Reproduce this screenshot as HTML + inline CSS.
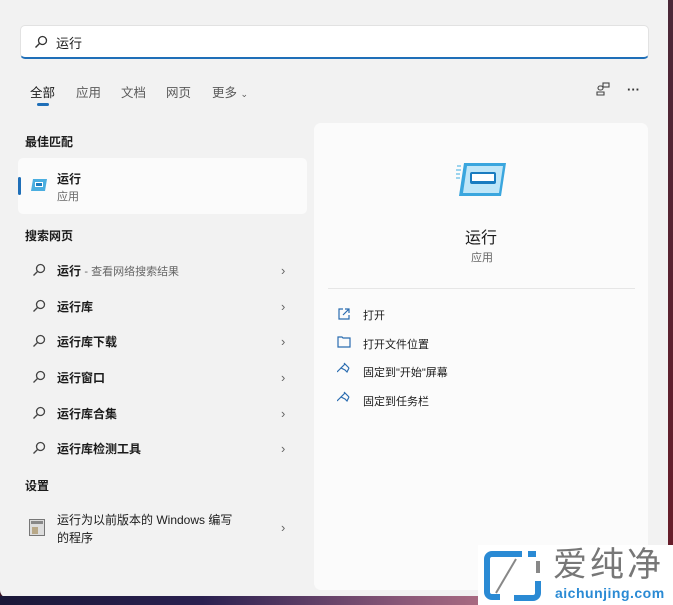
<!DOCTYPE html>
<html><head><meta charset="utf-8"><style>
*{margin:0;padding:0;box-sizing:border-box}
body{width:673px;height:605px;overflow:hidden;background:#3a1426;font-family:"Liberation Sans","Noto Sans CJK SC",sans-serif;position:relative;color:#1b1b1b}
.win{position:absolute;left:0;top:0;width:668px;height:598px;background:#f2f2f2;border-radius:0 0 8px 8px}
.strip{position:absolute;left:0;top:596px;width:673px;height:9px;background:linear-gradient(90deg,#1a1838,#2a2050 30%,#8a5878 60%,#c07888 80%,#a04050)}
.edge{position:absolute;right:0;top:0;width:5px;height:605px;background:linear-gradient(#4a2838,#6a1c28)}
.search{position:absolute;left:20px;top:25px;width:629px;height:34px;background:#fff;border:1px solid #e2e2e2;border-bottom:2px solid #1f6fb8;border-radius:5px}
.search span{position:absolute;left:35px;top:7px;font-size:13px}
.t{position:absolute;top:82px;font-size:12.5px;color:#5a5a5a}
.h{position:absolute;left:25px;font-size:12px;font-weight:bold}
.best{position:absolute;left:18px;top:158px;width:289px;height:56px;background:#fbfbfb;border-radius:5px}
.row{position:absolute;left:57px;font-size:12px;font-weight:bold}
.chev{position:absolute;left:281px;font-size:13px;color:#666}
.right{position:absolute;left:314px;top:123px;width:334px;height:467px;background:#fbfbfb;border-radius:7px}
.act{position:absolute;left:363px;font-size:11px}
svg{position:absolute}
</style></head><body>
<div class="win"></div>
<div class="strip"></div>
<div class="edge"></div>
<div class="search"><svg style="left:13px;top:9px" width="14" height="14" viewBox="0 0 14 14"><circle cx="8.5" cy="5.5" r="4" fill="none" stroke="#333" stroke-width="1.3"/><path d="M5.5 8.5L1.5 12.5" stroke="#333" stroke-width="1.4"/></svg><span>运行</span></div>
<div class="t" style="left:30px;color:#1b1b1b">全部</div>
<div style="position:absolute;left:37px;top:103px;width:12px;height:3px;background:#1f6fb8;border-radius:2px"></div>
<div class="t" style="left:76px">应用</div>
<div class="t" style="left:121px">文档</div>
<div class="t" style="left:166px">网页</div>
<div class="t" style="left:212px">更多 <span style="font-size:9px">⌄</span></div>
<svg style="left:595px;top:81px" width="16" height="16" viewBox="0 0 16 16" fill="none" stroke="#444" stroke-width="1.1"><rect x="8" y="2" width="6" height="4"/><rect x="3" y="5" width="5" height="4" rx="2"/><path d="M2 14v-3h7v3z"/></svg>
<div style="position:absolute;left:627px;top:82px;font-size:13px;font-weight:bold;color:#333">···</div>
<div class="h" style="top:133px">最佳匹配</div>
<div class="best"></div>
<div style="position:absolute;left:18px;top:177px;width:3px;height:18px;background:#1f6fb8;border-radius:2px"></div>
<svg style="left:30px;top:178px" width="18" height="14" viewBox="0 0 18 14"><path d="M3 1h14l-2 12H1z" fill="#4aaee0"/><rect x="5" y="4" width="8" height="5" fill="#fff"/><rect x="6" y="5" width="6" height="3" fill="#1a7cc0"/></svg>
<div class="row" style="top:170px">运行</div>
<div style="position:absolute;left:57px;top:188px;font-size:11px;color:#666">应用</div>
<div class="h" style="top:227px">搜索网页</div>
<div class="row" style="top:262px">运行 <span style="font-weight:normal;font-size:11px;color:#666">- 查看网络搜索结果</span></div>
<div class="row" style="top:298px">运行库</div>
<div class="row" style="top:333px">运行库下载</div>
<div class="row" style="top:369px">运行窗口</div>
<div class="row" style="top:405px">运行库合集</div>
<div class="row" style="top:440px">运行库检测工具</div>
<svg style="left:32px;top:263px" width="14" height="200" viewBox="0 0 14 200" fill="none" stroke="#444" stroke-width="1.3">
<g><circle cx="8.5" cy="5.5" r="4"/><path d="M5.5 8.5L1.5 12.5"/></g>
<g transform="translate(0,36)"><circle cx="8.5" cy="5.5" r="4"/><path d="M5.5 8.5L1.5 12.5"/></g>
<g transform="translate(0,71)"><circle cx="8.5" cy="5.5" r="4"/><path d="M5.5 8.5L1.5 12.5"/></g>
<g transform="translate(0,107)"><circle cx="8.5" cy="5.5" r="4"/><path d="M5.5 8.5L1.5 12.5"/></g>
<g transform="translate(0,143)"><circle cx="8.5" cy="5.5" r="4"/><path d="M5.5 8.5L1.5 12.5"/></g>
<g transform="translate(0,178)"><circle cx="8.5" cy="5.5" r="4"/><path d="M5.5 8.5L1.5 12.5"/></g>
</svg>
<div class="chev" style="top:263px">›</div><div class="chev" style="top:299px">›</div><div class="chev" style="top:334px">›</div><div class="chev" style="top:370px">›</div><div class="chev" style="top:406px">›</div><div class="chev" style="top:441px">›</div>
<div class="h" style="top:477px">设置</div>
<svg style="left:29px;top:519px" width="16" height="17" viewBox="0 0 16 17"><rect x="0.5" y="0.5" width="15" height="16" fill="#ddd" stroke="#777"/><rect x="2" y="2" width="12" height="3" fill="#888"/><rect x="3" y="8" width="6" height="7" fill="#b8a888"/></svg>
<div style="position:absolute;left:57px;top:511px;font-size:12px;line-height:18px">运行为以前版本的 Windows 编写<br>的程序</div>
<div class="chev" style="top:520px">›</div>
<div class="right"></div>
<svg style="left:455px;top:162px" width="52" height="35" viewBox="0 0 52 35"><path d="M2 4h4M1 8h5M1 12h4M1 16h4" stroke="#7cc8ea" stroke-width="1.5"/><path d="M9 1h42l-5 33H4z" fill="#3aa6de"/><path d="M12 4h36l-4 27H8z" fill="#bfe6f8"/><rect x="15" y="10" width="26" height="12" rx="2" fill="#1a7cc0"/><rect x="17" y="12" width="22" height="7" fill="#fff"/></svg>
<div style="position:absolute;left:465px;top:224px;font-size:16px">运行</div>
<div style="position:absolute;left:471px;top:249px;font-size:11px;color:#666">应用</div>
<div style="position:absolute;left:328px;top:288px;width:307px;height:1px;background:#e6e6e6"></div>
<svg style="left:337px;top:307px" width="14" height="110" viewBox="0 0 14 110" fill="none" stroke="#2a6cb0" stroke-width="1.2">
<path d="M6 2H2v10h10V8M8 2h4v4M12 2L6 8"/>
<path d="M1 30h4l1 1h7v9H1z"/>
<path d="M8 57l5 5M9 58l-4 4 4 2 2 2 2-4M5 62l-4 4" transform="translate(-1,-1)"/>
<path d="M8 86l5 5M9 87l-4 4 4 2 2 2 2-4M5 91l-4 4" transform="translate(-1,-1)"/>
</svg>
<div class="act" style="top:307px">打开</div>
<div class="act" style="top:336px">打开文件位置</div>
<div class="act" style="top:364px">固定到"开始"屏幕</div>
<div class="act" style="top:393px">固定到任务栏</div>
<div style="position:absolute;left:478px;top:545px;width:195px;height:60px;background:#fff"></div>
<svg style="left:484px;top:551px" width="60" height="50" viewBox="0 0 60 50" fill="none"><path d="M38 3H8a5 5 0 0 0-5 5v33a5 5 0 0 0 5 5h8" stroke="#2a8ad4" stroke-width="6"/><path d="M44 3h8M54 30v12a5 5 0 0 1-5 5H30" stroke="#2a8ad4" stroke-width="6"/><path d="M12 42L32 8" stroke="#888" stroke-width="2"/><path d="M54 10v12" stroke="#888" stroke-width="4"/></svg>
<div style="position:absolute;left:553px;top:546px;font-size:34px;color:#777;letter-spacing:3px;line-height:38px">爱纯净</div>
<div style="position:absolute;left:555px;top:585px;font-size:14px;font-weight:bold;color:#2a8ad4;line-height:16px;letter-spacing:0.5px">aichunjing.com</div>
</body></html>
